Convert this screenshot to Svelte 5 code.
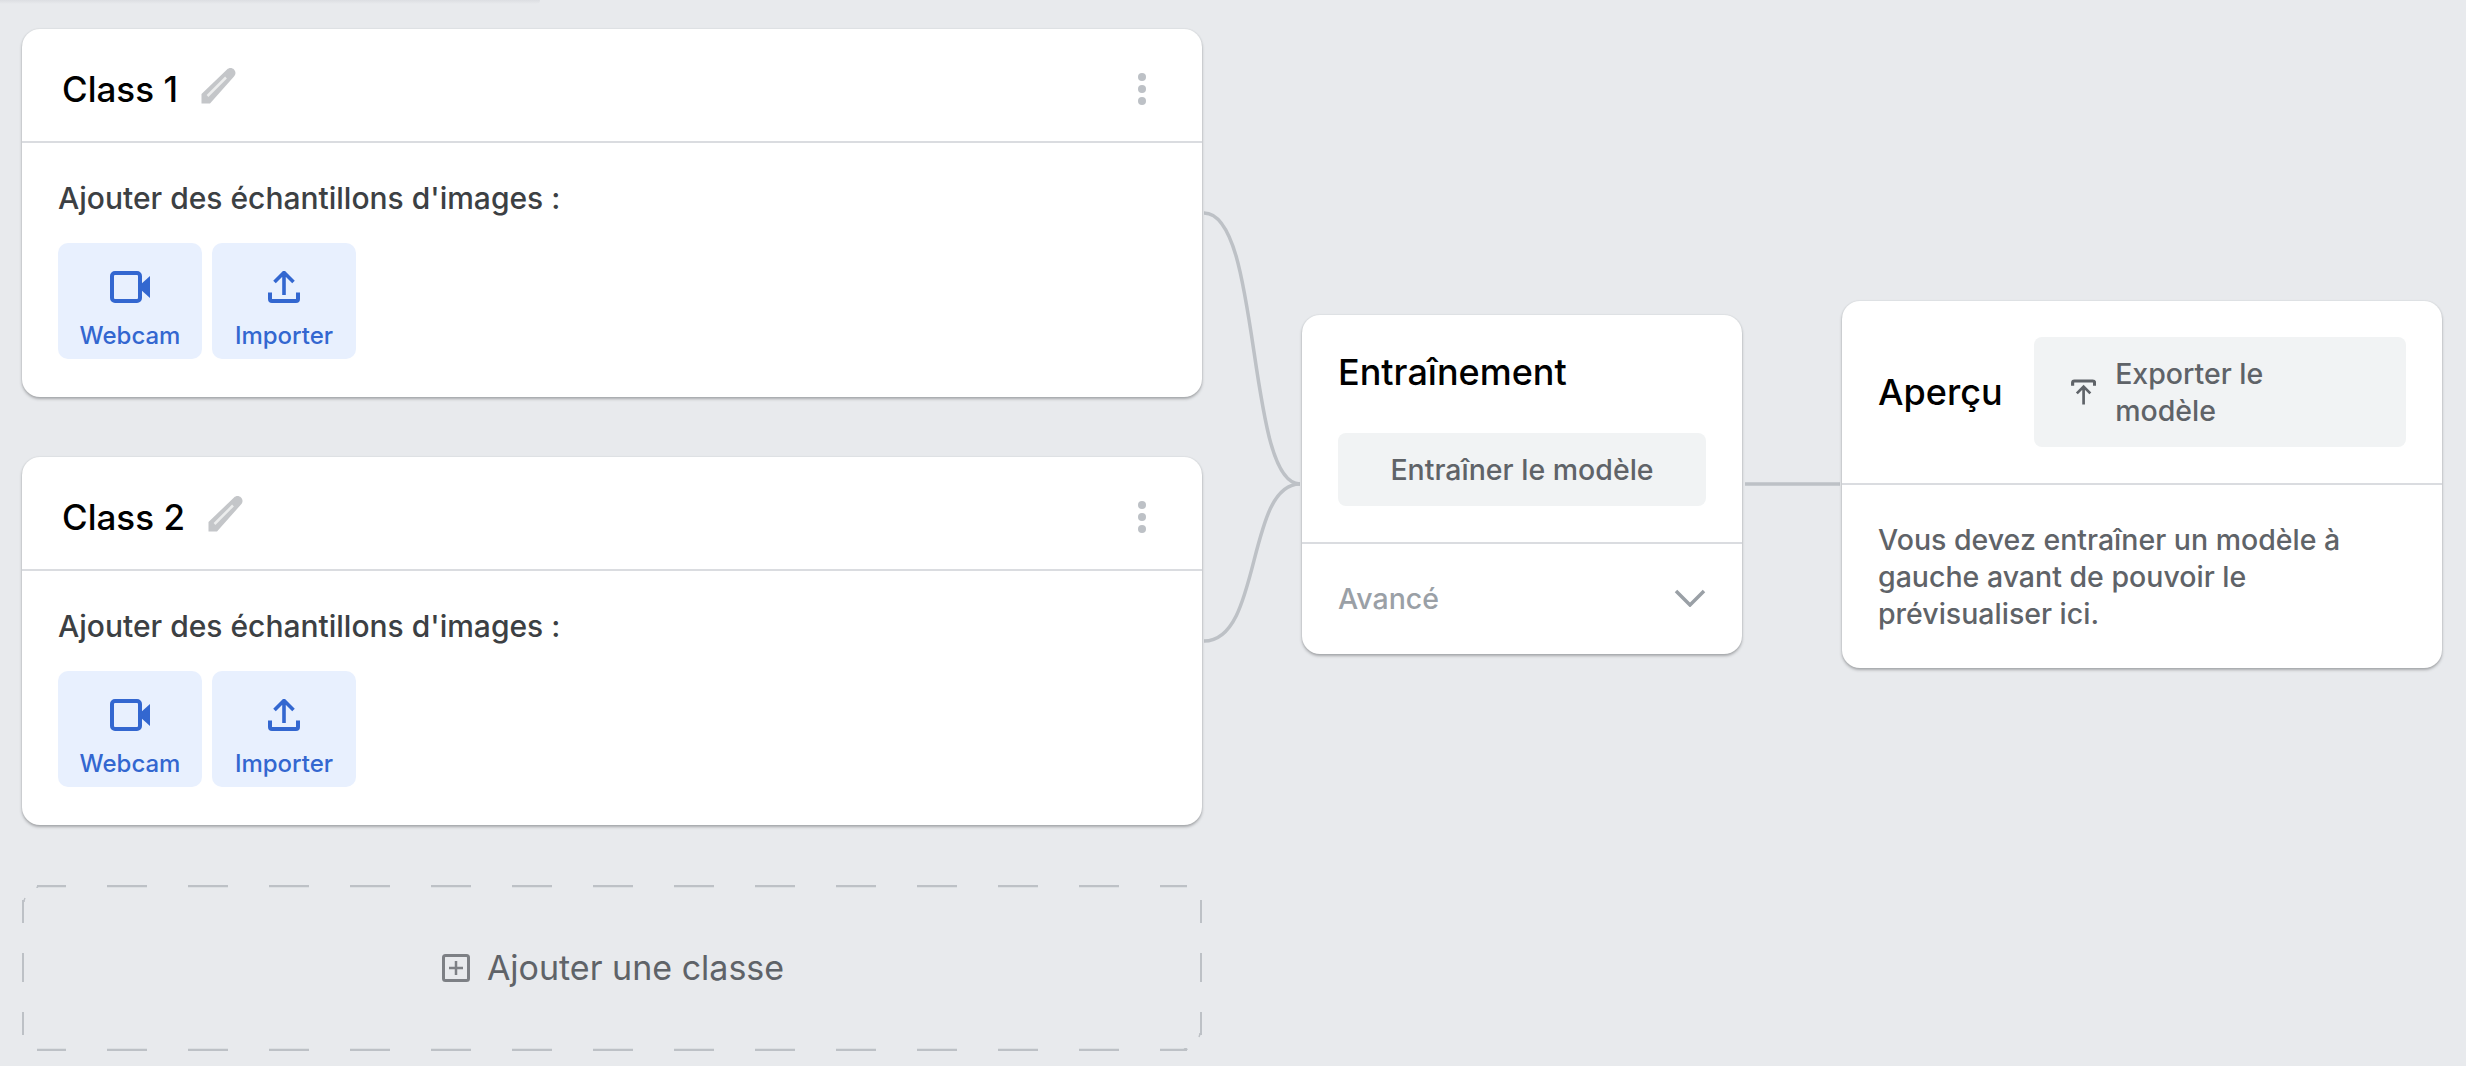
<script>
	const classes = ['Class 1', 'Class 2'];

	// dashes of the "add class" outline, in box coordinates
	const hDashes = [[15, 44]];
	for (let x = 85; x < 1150; x += 81) hDashes.push([x, Math.min(x + 40, 1165)]);
	const vDashes = [[15, 38], [68, 97], [127, 150]];
</script>

<div class="topshade"></div>

<main class="page">
	<svg class="wires" width="2466" height="1066" fill="none">
		<path d="M1204 213C1262 213 1246 484 1300 484" />
		<path d="M1204 641C1262 641 1246 484 1300 484" />
		<path d="M1745 484H1840" />
	</svg>

	<section class="classes">
		{#each classes as name}
			<article class="card class-card">
				<header class="class-head">
					<h2>{name}</h2>
					<svg class="pencil" viewBox="0 0 38 38" width="38" height="38">
						<path d="M27 2.500c2-2 5-2 7 0s2 5 0 7L10 36.500H1.500V27Z" fill="#c4c6c9" />
						<path d="M7.500 29 26 10.500" stroke="#eceded" stroke-width="2.500" />
					</svg>
					<div class="kebab"><i></i><i></i><i></i></div>
				</header>
				<div class="class-body">
					<p>Ajouter des échantillons d'images :</p>
					<div class="sources">
						<button>
							<svg viewBox="0 0 40 32" width="40" height="32">
								<rect x="2" y="2" width="28" height="28" rx="3" fill="none" stroke="#3367d0" stroke-width="4" />
								<path d="M30 14 40 5V27L30 18Z" fill="#3367d0" />
							</svg>
							<span>Webcam</span>
						</button>
						<button>
							<svg viewBox="0 0 32 32" width="32" height="32">
								<path d="M16 24V2M6.500 11 16 1.500 25.500 11" fill="none" stroke="#3367d0" stroke-width="3.600" />
								<path d="M2 21.500v6.500c0 1.200.8 2 2 2h24c1.200 0 2-.8 2-2v-6.500" fill="none" stroke="#3367d0" stroke-width="4" />
							</svg>
							<span>Importer</span>
						</button>
					</div>
				</div>
			</article>
		{/each}

		<div class="add-class">
			<svg class="dashes" width="1180" height="166" stroke="#bdc1c6" fill="none">
				{#each hDashes as [a, b]}
					<path d="M{a} 1H{b}" stroke-width="2.500" />
					<path d="M{a} 165H{b}" stroke-width="2.500" />
				{/each}
				{#each vDashes as [a, b]}
					<path d="M1 {a}V{b}" stroke-width="2" />
					<path d="M1179 {a}V{b}" stroke-width="2" />
				{/each}
				<path d="M15 3Q15 1 18 1M2 17Q2 15 3 13M1165 165Q1165 163 1162 164M1178 148Q1178 150 1177 152" stroke-width="1.500" />
			</svg>
			<svg viewBox="0 0 28 28" width="28" height="28" fill="none" stroke="#7d8085">
				<rect x="1.500" y="1.500" width="25" height="25" rx="2" stroke-width="3" />
				<path d="M14 7V21M7 14H21" stroke-width="2.500" />
			</svg>
			<span>Ajouter une classe</span>
		</div>
	</section>

	<div class="pipeline">
		<section class="card train">
			<div class="train-top">
				<h2>Entraînement</h2>
				<button class="grey-btn train-btn">Entraîner le modèle</button>
			</div>
			<div class="advanced">
				<span>Avancé</span>
				<svg viewBox="0 0 32 18" width="32" height="18">
					<path d="M2 2 16 16 30 2" fill="none" stroke="#9aa0a6" stroke-width="3.500" />
				</svg>
			</div>
		</section>

		<section class="card preview">
			<header class="preview-head">
				<h2>Aperçu</h2>
				<button class="grey-btn export-btn">
					<svg viewBox="0 0 28 28" width="28" height="28" fill="none" stroke="#5f6368">
						<path d="M1.800 7V3.800q0-2 2-2h20.400q2 0 2 2V7" stroke-width="3.500" />
						<path d="M14 28V9M6.500 15.500 14 8l7.500 7.500" stroke-width="3" />
					</svg>
					<span>Exporter le modèle</span>
				</button>
			</header>
			<p class="preview-note">Vous devez entraîner un modèle à gauche avant de pouvoir le prévisualiser ici.</p>
		</section>
	</div>
</main>

<style>
	:global(body) {
		background: #e8eaed;
		font-family: Inter, Roboto, "Liberation Sans", sans-serif;
	}

	.topshade {
		position: absolute;
		top: 0;
		left: 0;
		width: 540px;
		height: 4px;
		background: linear-gradient(#dcdee2, #e8eaed);
		border-radius: 0 0 6px 0;
	}

	.page {
		position: relative;
		display: flex;
		align-items: flex-start;
		gap: 100px;
		height: 1066px;
		box-sizing: border-box;
		padding: 29px 0 0 22px;
		overflow: hidden;
	}

	.wires {
		position: absolute;
		top: 0;
		left: 0;
	}

	.wires path {
		stroke: #bdc1c6;
		stroke-width: 3.5;
	}

	h2 {
		margin: 0;
		font-size: 36px;
		line-height: 40px;
		font-weight: 500;
		color: #000;
	}

	button {
		border: 0;
		font-family: inherit;
		padding: 0;
		font-weight: 450;
	}

	p {
		margin: 0;
		font-weight: 450;
	}

	.card {
		position: relative;
		background: #fff;
		border-radius: 18px;
		box-shadow: 0 2px 3px rgba(60, 64, 67, 0.38), 0 0 2px rgba(60, 64, 67, 0.12);
	}

	.classes {
		display: flex;
		flex-direction: column;
		width: 1180px;
		flex: none;
	}

	.class-card {
		height: 368px;
		margin-bottom: 60px;
	}

	.class-head {
		display: flex;
		align-items: center;
		height: 114px;
		box-sizing: border-box;
		padding: 8px 0 0 40px;
		border-bottom: 2px solid #dadce0;
	}

	.class-head h2 {
		font-size: 35px;
	}

	.pencil {
		margin: -7px 0 0 22px;
	}

	.kebab {
		display: flex;
		flex-direction: column;
		gap: 4px;
		margin-left: auto;
		margin-right: 56px;
	}

	.kebab i {
		width: 8px;
		height: 8px;
		border-radius: 50%;
		background: #bdc1c6;
	}

	.class-body {
		padding: 35px 36px 0;
	}

	.class-body p {
		font-size: 30px;
		line-height: 40px;
		color: #3c4043;
	}

	.sources {
		display: flex;
		gap: 10px;
		margin-top: 25px;
	}

	.sources button {
		display: flex;
		flex-direction: column;
		align-items: center;
		width: 144px;
		height: 116px;
		border-radius: 10px;
		background: #e8f0fe;
		color: #3367d0;
		font-size: 24px;
		padding-top: 28px;
		box-sizing: border-box;
	}

	.sources span {
		margin-top: 17px;
		line-height: 32px;
	}

	.add-class {
		position: relative;
		display: flex;
		align-items: center;
		justify-content: center;
		gap: 17px;
		height: 166px;
		padding: 0 0 1px 2px;
		box-sizing: border-box;
		color: #5f6368;
		font-size: 34px;
	}

	.dashes {
		position: absolute;
		top: 0;
		left: 0;
	}

	.pipeline {
		display: flex;
		align-items: center;
		gap: 100px;
		margin-top: 272px;
	}

	.train {
		width: 440px;
		height: 339px;
		flex: none;
	}

	.train-top {
		padding: 37px 36px 36px;
		border-bottom: 2px solid #dadce0;
	}

	.grey-btn {
		display: flex;
		align-items: center;
		background: #f1f3f4;
		border-radius: 8px;
		color: #5f6368;
		font-size: 28.500px;
	}

	.train-btn {
		justify-content: center;
		width: 100%;
		height: 73px;
		margin-top: 41px;
	}

	.advanced {
		display: flex;
		align-items: center;
		justify-content: space-between;
		height: 108px;
		padding: 0 36px;
		color: #9aa0a6;
		font-size: 28.500px;
		font-weight: 450;
	}

	.preview {
		width: 600px;
		height: 367px;
		flex: none;
	}

	.preview-head {
		display: flex;
		align-items: center;
		justify-content: space-between;
		height: 184px;
		box-sizing: border-box;
		padding: 0 36px;
		border-bottom: 2px solid #dadce0;
	}

	.export-btn {
		width: 372px;
		height: 110px;
		gap: 19px;
		padding: 0 60px 0 37px;
		box-sizing: border-box;
		text-align: left;
		line-height: 37px;
	}

	.preview-note {
		padding: 36px 36px 0;
		font-size: 28.500px;
		line-height: 37px;
		color: #5f6368;
	}
</style>
